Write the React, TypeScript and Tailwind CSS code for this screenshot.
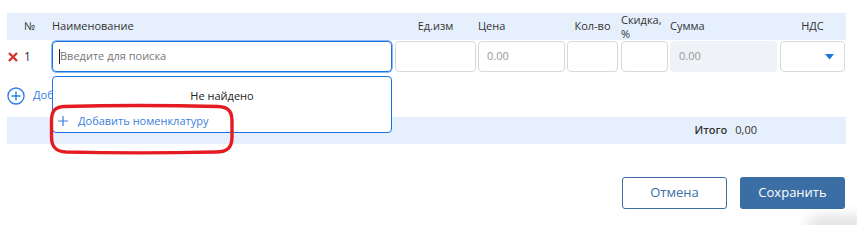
import React from "react";

const font = { fontFamily: '"Open Sans", "Noto Sans", sans-serif' };

const AddCircleIcon = () => (
  <svg width="18" height="18" viewBox="0 0 18 18" fill="none">
    <circle cx="9" cy="9" r="8" stroke="#2f7ee6" strokeWidth="1.4" />
    <path d="M9 4.5v9M4.5 9h9" stroke="#2f7ee6" strokeWidth="1.4" />
  </svg>
);

const App = () => {
  return (
    <div className="relative h-[225px] w-[857px] overflow-hidden bg-white text-[11px] text-[#333]" style={font}>
      <div className="pl-[7px] pr-[11px] pt-[13px]">
        {/* header */}
        <div className="flex h-[27px] items-center bg-[#e6f0fc]">
          <div className="w-[45px] pl-[17px]">№</div>
          <div className="w-[340px]">Наименование</div>
          <div className="ml-[3px] w-[81px] text-center">Ед.изм</div>
          <div className="ml-[2px] w-[87px]">Цена</div>
          <div className="ml-[2px] w-[51px] text-center">Кол-во</div>
          <div className="ml-[3px] w-[47px] leading-[14px]">
            Скидка,
            <br />%
          </div>
          <div className="ml-[2px] w-[107px]">Сумма</div>
          <div className="ml-[3px] w-[65px] text-center">НДС</div>
        </div>

        {/* row */}
        <div className="relative mt-[1px] flex h-[31px] items-stretch">
          <div className="flex w-[45px] items-center">
            <svg width="10" height="10" viewBox="0 0 10 10" className="ml-[1px]">
              <path d="M1 1l8 8M9 1L1 9" stroke="#d9322f" strokeWidth="2.4" />
            </svg>
            <span className="ml-[6px] text-[12px]">1</span>
          </div>
          <div className="flex w-[340px] items-center rounded-[4px] border border-[#1a73e8] pl-[6px] shadow-[0_0_0_0.5px_#1a73e8]">
            <span className="h-[15px] w-[1px] bg-[#222]" />
            <span className="text-[#777]">Введите для поиска</span>
          </div>
          <div className="ml-[3px] w-[81px] rounded-[4px] border border-[#d6d9de]" />
          <div className="ml-[2px] flex w-[87px] items-center rounded-[4px] border border-[#d6d9de] pl-[8px] text-[#999]">
            0.00
          </div>
          <div className="ml-[2px] w-[51px] rounded-[4px] border border-[#d6d9de]" />
          <div className="ml-[3px] w-[47px] rounded-[4px] border border-[#d6d9de]" />
          <div className="ml-[2px] flex w-[107px] items-center rounded-[4px] bg-[#eff2f6] pl-[9px] text-[#999]">
            0.00
          </div>
          <div className="ml-[3px] flex w-[65px] items-center justify-end rounded-[4px] border border-[#d6d9de] pr-[10px]">
            <svg width="9" height="6" viewBox="0 0 9 6">
              <path d="M0 0h9L4.5 5.5z" fill="#1f77e0" />
            </svg>
          </div>

          {/* dropdown */}
          <div className="absolute left-[45px] top-[35px] z-10 h-[57px] w-[340px] rounded-[4px] border border-[#1a73e8] bg-white">
            <div className="mt-[11px] text-center text-[#222]">Не найдено</div>
            <div className="mt-[8px] flex items-center pl-[5px] text-[#3b7ddd]">
              <svg width="10" height="10" viewBox="0 0 10 10">
                <path d="M5 0v10M0 5h10" stroke="#3b7ddd" strokeWidth="1.2" />
              </svg>
              <span className="ml-[10px]">Добавить номенклатуру</span>
            </div>
          </div>
        </div>

        {/* add row */}
        <div className="mt-[15px] flex h-[17px] items-center text-[#2f7ee6]">
          <AddCircleIcon />
          <span className="ml-[8px]">Добавить строку</span>
        </div>

        {/* total */}
        <div className="mt-[13px] flex h-[27px] items-center justify-end bg-[#e6f0fc] pr-[89px]">
          <span className="font-semibold">Итого</span>
          <span className="ml-[8px]">0,00</span>
        </div>

        {/* buttons */}
        <div className="mt-[33px] flex justify-end gap-[13px] pr-[1px]">
          <button className="h-[32px] w-[105px] rounded-[3px] border border-[#3a6ea5] bg-white text-[13px] text-[#3a6ea5]">
            Отмена
          </button>
          <button className="h-[32px] w-[105px] rounded-[3px] bg-[#3a6ea5] text-[13px] text-white">
            Сохранить
          </button>
        </div>
      </div>

      {/* hand drawn highlight */}
      <svg className="pointer-events-none absolute left-[48px] top-[103px] z-20" width="188" height="52" viewBox="0 0 188 52">
        <path
          d="M16 3.5 C70 2 130 2.5 170 3.5 C181 4 184 9 184 18 L184 34 C184 44 180 49 168 49 C120 50 60 50 18 49 C8 48.5 3.5 44 3.5 34 L3.5 18 C3.5 8 7 4 16 3.5 Z"
          fill="none"
          stroke="#e51b23"
          strokeWidth="3.4"
        />
      </svg>

      {/* shadow from element below */}
      <div className="pointer-events-none absolute bottom-[-14px] right-[-20px] h-[24px] w-[70px] rounded-full bg-[#000]/10 blur-[6px]" />
    </div>
  );
};

export default App;
